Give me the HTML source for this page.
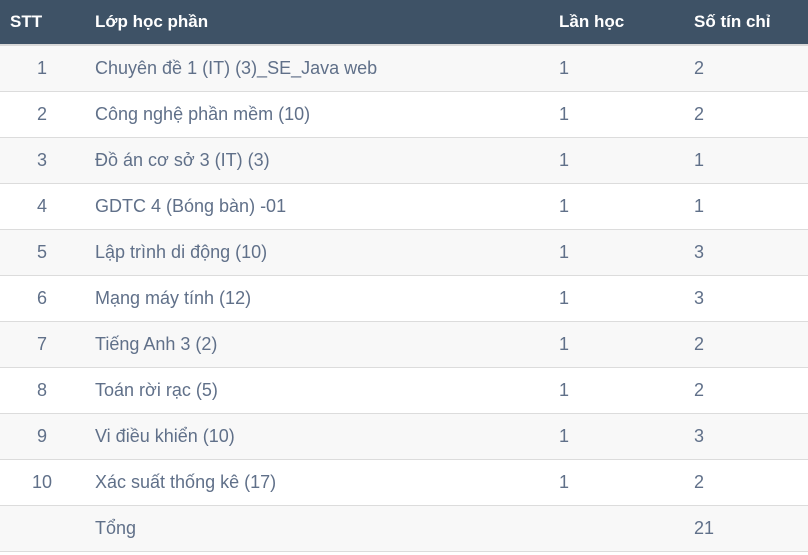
<!DOCTYPE html>
<html><head><meta charset="utf-8"><style>
body{margin:0;width:808px;height:555px;background:#fff;overflow:hidden;font-family:"Liberation Sans",sans-serif;}
table{border-collapse:collapse;width:808px;table-layout:fixed;}
th{background:#3e5266;color:#fff;font-weight:bold;font-size:17px;height:44px;text-align:left;padding:0;border-bottom:2px solid #d9d9d9;}
td{height:45px;border-bottom:1px solid #dcdcdc;color:#607089;font-size:18px;padding:0;}
tbody tr:nth-child(odd) td{background:#f8f8f8;}
.c1{text-align:center;}
.c2{padding-left:11px;}
</style></head><body>
<table>
<colgroup><col style="width:84px"><col style="width:475px"><col style="width:135px"><col style="width:114px"></colgroup>
<thead><tr><th style="padding-left:10px">STT</th><th class="c2">Lớp học phần</th><th>Lần học</th><th>Số tín chỉ</th></tr></thead>
<tbody>
<tr><td class="c1">1</td><td class="c2">Chuyên đề 1 (IT) (3)_SE_Java web</td><td>1</td><td>2</td></tr>
<tr><td class="c1">2</td><td class="c2">Công nghệ phần mềm (10)</td><td>1</td><td>2</td></tr>
<tr><td class="c1">3</td><td class="c2">Đồ án cơ sở 3 (IT) (3)</td><td>1</td><td>1</td></tr>
<tr><td class="c1">4</td><td class="c2">GDTC 4 (Bóng bàn) -01</td><td>1</td><td>1</td></tr>
<tr><td class="c1">5</td><td class="c2">Lập trình di động (10)</td><td>1</td><td>3</td></tr>
<tr><td class="c1">6</td><td class="c2">Mạng máy tính (12)</td><td>1</td><td>3</td></tr>
<tr><td class="c1">7</td><td class="c2">Tiếng Anh 3 (2)</td><td>1</td><td>2</td></tr>
<tr><td class="c1">8</td><td class="c2">Toán rời rạc (5)</td><td>1</td><td>2</td></tr>
<tr><td class="c1">9</td><td class="c2">Vi điều khiển (10)</td><td>1</td><td>3</td></tr>
<tr><td class="c1">10</td><td class="c2">Xác suất thống kê (17)</td><td>1</td><td>2</td></tr>
<tr><td class="c1"></td><td class="c2">Tổng</td><td></td><td>21</td></tr>
</tbody></table>
</body></html>
